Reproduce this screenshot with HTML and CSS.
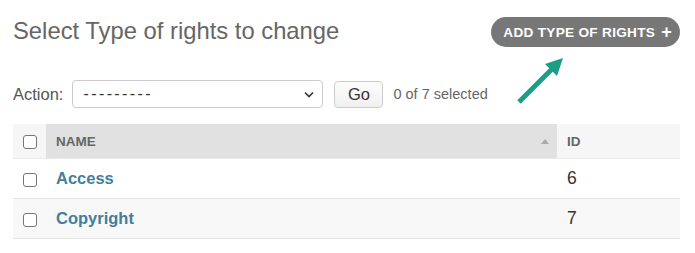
FILE: index.html
```html
<!DOCTYPE html>
<html>
<head>
<meta charset="utf-8">
<link rel="stylesheet" href="styles.css">
</head>
<body>
<div class="page">
  <div class="head">
    <h1 class="title">Select Type of rights to change</h1>
    <div class="tools">
      <a class="addlink">ADD TYPE OF RIGHTS <span class="plus">+</span></a>
      <svg class="arrow" width="60" height="60" viewBox="0 0 60 60">
        <line x1="8" y1="52" x2="42" y2="18" stroke="#1c9e86" stroke-width="5"/>
        <polygon points="52,8 34,14 46,26" fill="#1c9e86"/>
      </svg>
    </div>
  </div>
  <div class="actions">
    <label class="lbl">Action:</label>
    <div class="select"><span>---------</span>
      <svg width="10" height="7" viewBox="0 0 10 7"><path d="M1 1.5 L5 5.5 L9 1.5" fill="none" stroke="#333" stroke-width="1.6"/></svg>
    </div>
    <button class="go">Go</button>
    <span class="counter">0 of 7 selected</span>
  </div>
  <table class="result">
    <thead>
      <tr>
        <th class="cb"><span class="box"></span></th>
        <th class="name sorted">NAME<span class="sort"></span></th>
        <th class="id">ID</th>
      </tr>
    </thead>
    <tbody>
      <tr><td class="cb"><span class="box"></span></td><td class="name"><a>Access</a></td><td class="id">6</td></tr>
      <tr class="alt"><td class="cb"><span class="box"></span></td><td class="name"><a>Copyright</a></td><td class="id">7</td></tr>
    </tbody>
  </table>
</div>
</body>
</html>
```

FILE: styles.css
```css
html, body { margin: 0; padding: 0; background: #fff; }
body { font-family: "Liberation Sans", Arial, sans-serif; color: #333; overflow: hidden; }
.page { padding: 0 15px 0 13px; }
.head { display: flex; justify-content: space-between; align-items: flex-start; height: 77px; }
.title { margin: 16px 0 0 0; font-size: 23.8px; font-weight: normal; color: #666; line-height: 30px; }
.tools { position: relative; margin-top: 17px; }
.addlink { display: inline-flex; align-items: center; height: 30px; padding: 0 8px 0 12px; border-radius: 15px; background: #777; color: #fff; font-weight: bold; font-size: 13.6px; letter-spacing: 0.3px; }
.plus { font-size: 18px; margin-left: 6px; font-weight: bold; }
.arrow { position: absolute; left: 20px; top: 33px; }
.actions { display: flex; align-items: center; height: 28px; margin-top: 3px; }
.lbl { font-size: 16.5px; color: #555; margin-right: 9px; }
.select { width: 231px; height: 26px; border: 1px solid #ccc; border-radius: 4px; display: flex; align-items: center; justify-content: space-between; padding: 0 8px 0 10px; font-size: 16px; color: #333; margin-right: 11px; }
.select span { letter-spacing: 2.4px; }
.go { width: 49px; height: 27px; border: 1px solid #ccc; border-radius: 4px; background: linear-gradient(#fdfdfd, #f0f0f0); font-family: inherit; font-size: 16.5px; color: #333; padding: 0; margin-right: 10px; }
.counter { font-size: 14.5px; color: #666; }
.result { border-collapse: collapse; width: 667px; margin-top: 16px; }
.result th { height: 34px; text-align: left; font-size: 13.5px; font-weight: bold; color: #666; background: #f6f6f6; border-bottom: 1px solid #eaeaea; padding: 0; }
.result th.sorted { background: #e1e1e1; position: relative; }
.result th.name { padding-left: 10px; }
.result th.id { padding-left: 10px; width: 113px; }
.sort { position: absolute; right: 8px; top: 15px; width: 0; height: 0; border-left: 4px solid transparent; border-right: 4px solid transparent; border-bottom: 5px solid #aaa; }
.result td { height: 39px; padding: 0; border-bottom: 1px solid #e6e6e6; font-size: 16.5px; }
.result td.name { padding-left: 10px; }
.result td.name a { color: #447e9b; font-weight: bold; }
.result td.id { padding-left: 10px; font-size: 17.5px; color: #333; }
.result tr.alt td { background: #f8f8f8; }
.result .cb { width: 33px; text-align: center; }
.box { display: inline-block; width: 12px; height: 12px; border: 1px solid #767676; border-radius: 3px; background: #fff; vertical-align: middle; }
```
